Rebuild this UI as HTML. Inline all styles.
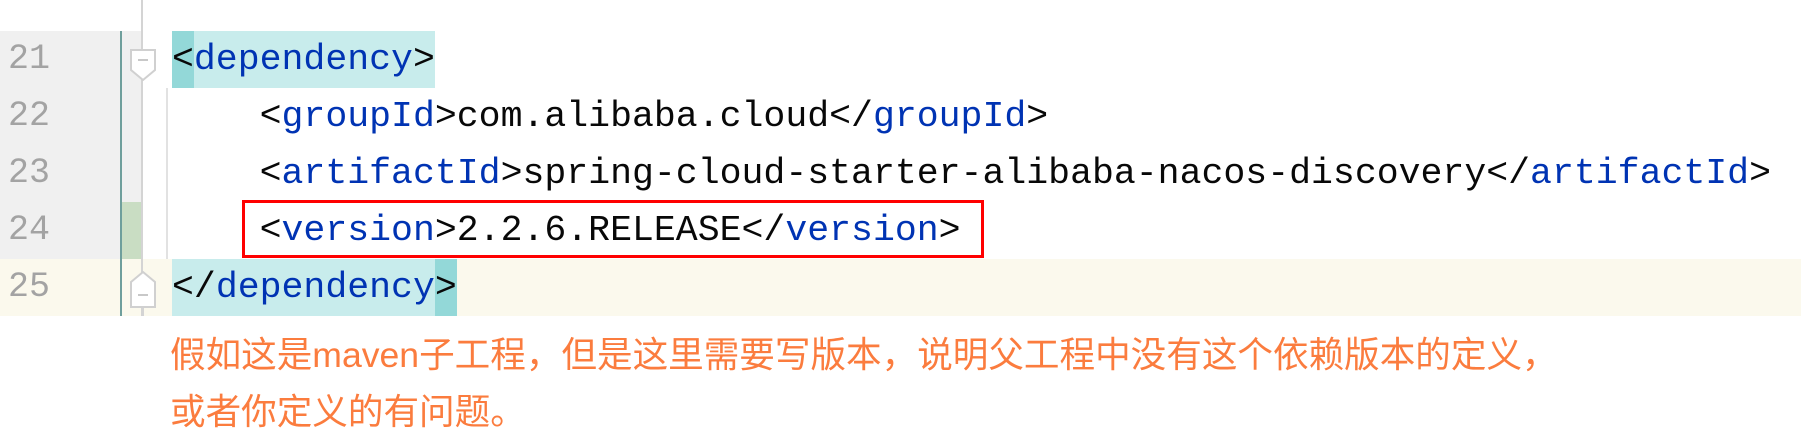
<!DOCTYPE html>
<html><head><meta charset="utf-8"><style>
body{margin:0;width:1801px;height:438px;background:#fff;position:relative;overflow:hidden}
.a{position:absolute}
.code{font-family:"Liberation Mono",monospace;font-size:36.5px;line-height:57px;white-space:pre;color:#080808}
.t{color:#0033b3}
.h{background:#c8ecec;display:inline-block;height:57px;vertical-align:top}
.d{background:#93d8d8;display:inline-block;height:57px;vertical-align:top}
.ln{font-family:"Liberation Mono",monospace;font-size:35px;line-height:57px;color:#a3a3a3;left:8px}
</style></head><body>
<div class="a" style="left:0;top:31px;width:142px;height:228px;background:#f0f0f0"></div>
<div class="a" style="left:0;top:259px;width:1801px;height:57px;background:#fbf9ed"></div>
<div class="a" style="left:121px;top:202px;width:21px;height:57px;background:#c9ddc3"></div>
<div class="a" style="left:120px;top:31px;width:2px;height:285px;background:#6f9f9c"></div>
<div class="a" style="left:141px;top:0;width:2px;height:316px;background:#d4d4d4"></div>
<div class="a" style="left:166px;top:88px;width:2px;height:171px;background:#e2e2e2"></div>
<svg class="a" style="left:130px;top:49px" width="26" height="32"><path d="M1 1H25V21L13 31L1 21Z" fill="#fff" stroke="#d0d0d0" stroke-width="2"/><path d="M8 11H18" stroke="#c8c8c8" stroke-width="2"/></svg>
<svg class="a" style="left:130px;top:271px" width="26" height="38"><path d="M1 11L13 1L25 11V36H1Z" fill="#fff" stroke="#d0d0d0" stroke-width="2"/><path d="M8 24H18" stroke="#c8c8c8" stroke-width="2"/></svg>
<div class="a" style="left:142px;top:308px;width:2px;height:8px;background:#d4d4d4"></div>
<div class="a" style="left:242px;top:200px;width:736px;height:52px;border:3px solid #f00"></div>
<div class="a ln" style="top:31px">21</div>
<div class="a ln" style="top:88px">22</div>
<div class="a ln" style="top:145px">23</div>
<div class="a ln" style="top:202px">24</div>
<div class="a ln" style="top:259px">25</div>
<div class="a code" style="left:172px;top:31px"><span class="h"><span class="d">&lt;</span><span class="t">dependency</span>&gt;</span>
    &lt;<span class="t">groupId</span>&gt;com.alibaba.cloud&lt;/<span class="t">groupId</span>&gt;
    &lt;<span class="t">artifactId</span>&gt;spring-cloud-starter-alibaba-nacos-discovery&lt;/<span class="t">artifactId</span>&gt;
    &lt;<span class="t">version</span>&gt;2.2.6.RELEASE&lt;/<span class="t">version</span>&gt;
<span class="h">&lt;/<span class="t">dependency</span><span class="d">&gt;</span></span></div>
<div class="a" style="left:170px;top:327px;font-family:'Liberation Sans','Noto Sans CJK SC',sans-serif;font-size:35.6px;line-height:57px;color:#fb7c3e;white-space:nowrap">假如这是maven子工程，但是这里需要写版本，说明父工程中没有这个依赖版本的定义，<br>或者你定义的有问题。</div>
</body></html>
